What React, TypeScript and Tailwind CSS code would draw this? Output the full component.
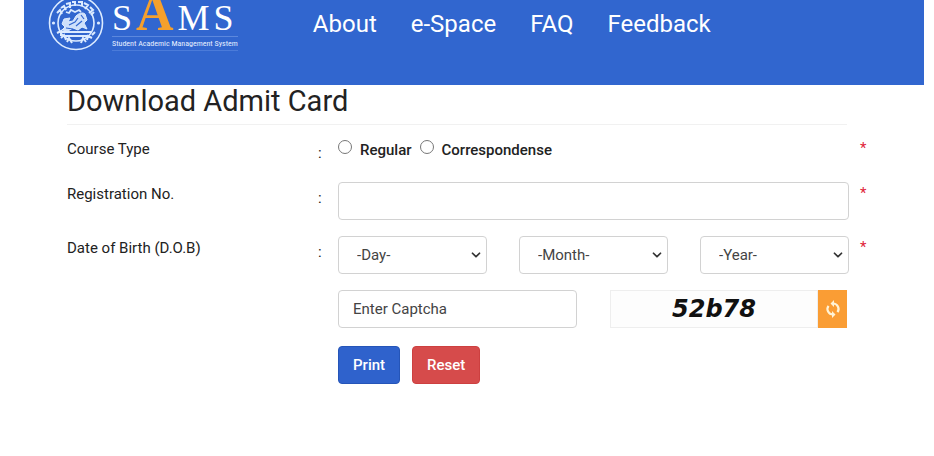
import { ChevronDown } from "lucide-react";
import type { ReactNode } from "react";

const navItems = ["About", "e-Space", "FAQ", "Feedback"];

const dateFields = [
  { id: "day", label: "-Day-", options: Array.from({ length: 31 }, (_, i) => String(i + 1)) },
  {
    id: "month",
    label: "-Month-",
    options: ["January", "February", "March", "April", "May", "June", "July", "August", "September", "October", "November", "December"]
  },
  { id: "year", label: "-Year-", options: Array.from({ length: 30 }, (_, i) => String(2010 - i)) }
];

const fieldClass =
  "h-[38px] w-full rounded border border-[#d2d2d2] bg-white text-[15px] text-[#444] placeholder:text-[#444] outline-none focus:border-[#3166cf]";

function Emblem() {
  return (
    <svg viewBox="0 5 56 51" className="h-[51px] w-14 shrink-0" fill="none" stroke="#dcebff" aria-hidden="true">
      <circle cx="28" cy="28" r="26.5" strokeWidth="1.6" />
      <circle cx="28" cy="28" r="18" strokeWidth="1.6" />
      <path d="M9 18l3-3 2 4M13 13l3-2 2 4M18 9l4-1 0 5M24 7l3 0 0 4M30 7h4v4M36 8l4 2-3 4M42 12l3 3-4 3M46 17l-3 3" strokeWidth="2" />
      <path d="M9 38l4-2 0 5M13 43l3-3 2 5M19 47l2-4 3 5M33 48l2-5 3 4M39 45l1-4 4 2M44 40l3-3" strokeWidth="2" />
      <circle cx="5.500" cy="28" r="1.600" fill="#dcebff" stroke="none" />
      <circle cx="50.500" cy="28" r="1.600" fill="#dcebff" stroke="none" />
      <path d="M16 24l6-1-2 4 5-1 3-5c3-3 7-4 9-2l2 6-3 3 3 6-5-2-4 3-5-2-5 3-6-1 3-3-3-3z" fill="#cfe0fa" strokeWidth="1" />
      <path d="M21 30l6-3 3-4M28 31l6-5M33 20l3 4M18 33l7 1" stroke="#3166cf" strokeWidth="1.2" />
      <path d="M18 17l3 1 2-3 4 2 4-2 2 2M13 37h30M16 41h24" strokeWidth="1.8" />
    </svg>
  );
}

function Logo() {
  return (
    <a href="#" className="flex shrink-0 gap-2" aria-label="SAMS">
      <Emblem />
      <span className="block">
        <span className="flex h-[37px] items-baseline gap-1 border-b border-[#5c88dd] font-['Liberation_Serif',serif] text-[36px] leading-[34px] text-white">
          <span>S</span>
          <span className="text-[52px] leading-[26px] font-bold text-[#f5a02c]">A</span>
          <span>M</span>
          <span>S</span>
        </span>
        <span className="block border-b border-[#4b7bd9] font-['Roboto_Condensed',Roboto,sans-serif] text-[8px] leading-[13px] whitespace-nowrap text-[#e6f0ff]">
          Student Academic Management System
        </span>
      </span>
    </a>
  );
}

function RefreshIcon() {
  return (
    <svg viewBox="0 0 18 20" className="h-5 w-[18px]" fill="none" stroke="#fff3d6" strokeWidth="2.2" aria-hidden="true">
      <path d="M9 4.500A5.500 5.500 0 0 1 13.500 13.200M9 15.500A5.500 5.500 0 0 1 4.500 6.800" />
      <path d="M10 1L6.500 4.500L10 8zM8 12L11.500 15.500L8 19z" fill="#fff3d6" stroke="none" />
    </svg>
  );
}

function FormRow({ label, htmlFor, children }: { label: string; htmlFor: string; children: ReactNode }) {
  return (
    <div className="grid grid-cols-[251fr_20fr_511fr_22fr]">
      <label htmlFor={htmlFor} className="pt-[2px] leading-5">
        {label}
      </label>
      <span className="pt-[6px] leading-5">:</span>
      <div>{children}</div>
      <span className="pl-[11px] leading-[22px] text-[#e0243a]">*</span>
    </div>
  );
}

export default function App() {
  return (
    <div className="min-h-screen bg-white pr-[10px] pl-6 font-[Roboto,sans-serif] text-[15px] text-[#222]">
      <header className="flex h-[85px] items-start overflow-hidden bg-[#3166cf] pl-6">
        <Logo />
        <nav className="ml-[75px] flex gap-[34px] pt-2 text-[24px] leading-8 text-white">
          {navItems.map((item) => (
            <a key={item} href="#">
              {item}
            </a>
          ))}
        </nav>
      </header>

      <main className="pr-[53px] pl-[43px]">
        <h1 className="mr-6 border-b border-[#f1f1f1] pb-[6px] text-[29px] leading-[33px]">Download Admit Card</h1>

        <form className="mt-3" onSubmit={(e) => e.preventDefault()}>
          <FormRow label="Course Type" htmlFor="regular">
            <div className="flex h-[29px] items-start gap-2 pt-[3px] leading-5 font-medium">
              <input
                id="regular"
                name="course"
                type="radio"
                className="size-[14px] appearance-none rounded-full border border-[#777] checked:border-4"
              />
              <label htmlFor="regular">Regular</label>
              <input
                id="correspondense"
                name="course"
                type="radio"
                className="size-[14px] appearance-none rounded-full border border-[#777] checked:border-4"
              />
              <label htmlFor="correspondense">Correspondense</label>
            </div>
          </FormRow>

          <div className="mt-4">
            <FormRow label="Registration No." htmlFor="registration">
              <input id="registration" type="text" className={`${fieldClass} px-[14px]`} />
            </FormRow>
          </div>

          <div className="mt-4">
            <FormRow label="Date of Birth (D.O.B)" htmlFor="day">
              <div className="grid grid-cols-3 gap-8">
                {dateFields.map((field) => (
                  <div key={field.id} className="relative">
                    <select id={field.id} aria-label={field.label} className={`${fieldClass} appearance-none pl-[18px]`}>
                      <option>{field.label}</option>
                      {field.options.map((option) => (
                        <option key={option}>{option}</option>
                      ))}
                    </select>
                    <ChevronDown
                      className="pointer-events-none absolute top-3 right-1 size-[14px] text-[#333]"
                      strokeWidth={3}
                    />
                  </div>
                ))}
              </div>
            </FormRow>
          </div>

          <div className="mt-4 grid grid-cols-[271fr_239fr_33fr_237fr_24fr]">
            <div className="col-start-2">
              <input type="text" aria-label="Enter Captcha" placeholder="Enter Captcha" className={`${fieldClass} px-[14px]`} />
            </div>
            <div className="col-start-4 flex h-[38px]">
              <div className="flex flex-1 items-center justify-center border border-[#eee] bg-[#fdfdfd] font-['DejaVu_Sans',sans-serif] text-[24px] leading-6 font-bold text-[#111] italic">
                52b78
              </div>
              <button type="button" aria-label="Refresh captcha" className="flex w-[29px] items-center justify-center bg-[#fa9d34]">
                <RefreshIcon />
              </button>
            </div>
          </div>

          <div className="mt-[18px] grid grid-cols-[271fr_533fr]">
            <div className="col-start-2 flex gap-3 font-medium text-white">
              <button type="submit" className="h-[38px] rounded border border-[#2555b8] bg-[#2f62cc] px-[14px]">
                Print
              </button>
              <button type="reset" className="h-[38px] rounded border border-[#cd4040] bg-[#d64b4b] px-[14px]">
                Reset
              </button>
            </div>
          </div>
        </form>
      </main>
    </div>
  );
}
